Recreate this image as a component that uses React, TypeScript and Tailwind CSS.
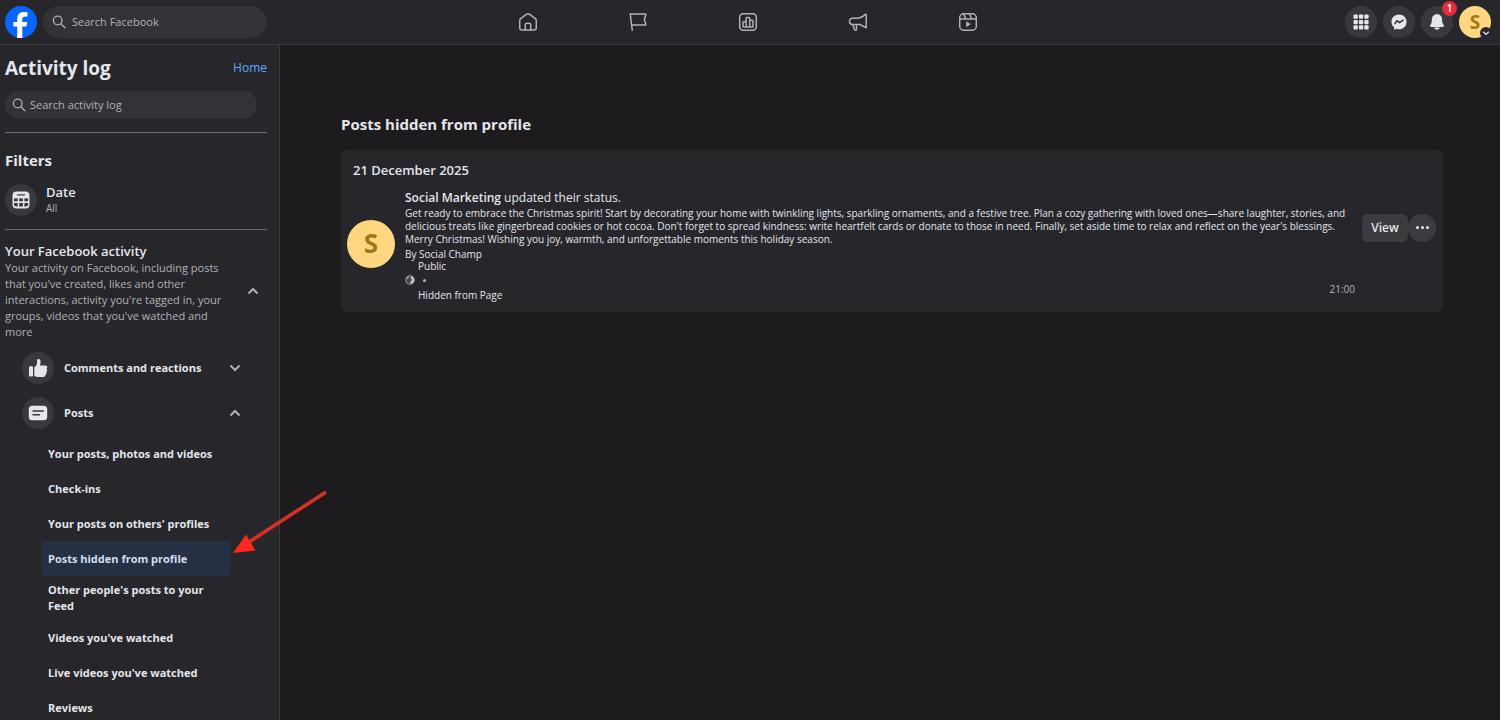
import type { ReactNode } from "react";

const activityLinks = [
  { label: "Your posts, photos and videos", href: "#posts" },
  { label: "Check-ins", href: "#check-ins" },
  { label: "Your posts on others' profiles", href: "#others" },
  { label: "Posts hidden from profile", href: "#hidden", active: true },
  { label: "Other people's posts to your Feed", href: "#feed" },
  { label: "Videos you've watched", href: "#videos" },
  { label: "Live videos you've watched", href: "#live" },
  { label: "Reviews", href: "#reviews" },
];

function FacebookLogo() {
  return (
    <svg viewBox="0 0 32 32" className="w-8 h-8">
      <circle cx="16" cy="16" r="16" fill="#0866ff" />
      <path
        d="M12.2 32V20.6H8.4V16h3.8v-2.6c0-5.2 2.4-7.3 7-7.3 1.400 0 2.500.1 3.300.3v4.200c-.5-.1-1.200-.1-2-.1-2.400 0-3.200.9-3.200 3.200V16h5l-.9 4.600h-4.100V32z"
        fill="#fff"
      />
    </svg>
  );
}

function SearchIcon() {
  return (
    <svg viewBox="0 0 14 14" className="w-[14px] h-[14px] shrink-0" fill="none" stroke="#b0b1b5" strokeWidth="1.3" strokeLinecap="round">
      <circle cx="5.700" cy="5.500" r="4.300" />
      <path d="M8.900 8.700l4 4" />
    </svg>
  );
}

function Chevron({ up = false }: { up?: boolean }) {
  return (
    <svg viewBox="0 0 12 12" className="w-3 h-3 shrink-0" fill="none" stroke="#b0b1b5" strokeWidth="2">
      <path d={up ? "M1.500 8.500L6 4l4.500 4.500" : "M1.500 3.500L6 8l4.500-4.500"} />
    </svg>
  );
}

function NavIcon({ label, children }: { label: string; children: ReactNode }) {
  return (
    <a href="#nav" aria-label={label} className="flex w-[110px] h-11 items-center justify-center">
      <svg viewBox="0 0 20 20" className="w-5 h-5" fill="none" stroke="#b0b1b5" strokeWidth="1.500" strokeLinejoin="round" strokeLinecap="round">
        {children}
      </svg>
    </a>
  );
}

function Header() {
  return (
    <header className="flex h-[45px] shrink-0 items-center border-b border-[#3a3a3f] bg-[#27272b] pl-[5px] pr-[9px]">
      <div className="flex flex-1 items-center gap-[6px]">
        <a href="#home" aria-label="Facebook"><FacebookLogo /></a>
        <label className="flex h-8 w-[224px] items-center gap-[6px] rounded-full bg-[#333337] px-[9px]">
          <SearchIcon />
          <input aria-label="Search Facebook" placeholder="Search Facebook" className="w-full bg-transparent text-[11px] outline-none placeholder:text-[#b0b1b5]" />
        </label>
      </div>

      <nav className="flex">
        <NavIcon label="Home">
          <path d="M1.700 8.600c0-1 .4-1.700 1.200-2.300l5.500-4c1-.7 2.200-.7 3.200 0l5.500 4c.8.600 1.200 1.300 1.200 2.300v6.900c0 1.500-1 2.500-2.500 2.500H4.200c-1.500 0-2.500-1-2.500-2.500z" />
          <path d="M7.300 18v-5.500c0-.8.500-1.300 1.300-1.300h2.800c.8 0 1.300.5 1.300 1.300V18" />
        </NavIcon>
        <NavIcon label="Pages">
          <path d="M4.300 18.300L2.200 2h15.100c.5 0 .7.300.5.800l-1.500 4.600 1.500 4.800c.2.500 0 .8-.5.800H3.700" />
        </NavIcon>
        <NavIcon label="Insights">
          <rect x="1.700" y="1.800" width="16.600" height="16.400" rx="3.500" />
          <path d="M5 14.300V10.400c0-.5.200-.7.700-.7h2.400v5.300H5.700c-.5 0-.7-.2-.7-.7zM8.100 15V6.200c0-.5.300-.8.800-.8h2c.5 0 .8.300.8.800V15zM11.700 8.300h2.500c.5 0 .8.300.8.800v5.100c0 .5-.3.800-.8.800h-2.500z" />
        </NavIcon>
        <NavIcon label="Ads">
          <path d="M18.200 2.700v13.100L12 12.500H4.400C2.600 12.500 1.500 11.300 1.500 9.600v-.4c0-1.700 1.100-2.900 2.900-2.900H10c3.200-.3 5.500-2.100 7.300-3.900.4-.4.900-.2.900.3z" />
          <path d="M5 12.700l1.300 4.600c.2.600.5.900 1.100.9.700 0 1.100-.5 1.100-1.200v-4.300" />
        </NavIcon>
        <NavIcon label="Reels">
          <rect x="1.700" y="1.800" width="16.600" height="16.400" rx="4" />
          <path d="M1.700 6.900h16.600M5.800 2.100l1.900 4.800M11.600 1.900l1.900 4.900" />
          <path d="M8.500 10.200v4.200l3.600-2.100z" fill="#b0b1b5" strokeWidth=".8" />
        </NavIcon>
      </nav>

      <div className="flex flex-1 items-center justify-end gap-[6px]">
        <button aria-label="Menu" className="flex size-8 items-center justify-center rounded-full bg-[#39393d]">
          <svg viewBox="0 0 16 16" className="w-4 h-4" fill="#e4e6eb">
            {[0.5, 5.9, 11.3].map((y) =>
              [0.5, 5.9, 11.3].map((x) => <rect key={`${x}-${y}`} x={x} y={y} width="4.300" height="4.300" rx="1" />)
            )}
          </svg>
        </button>
        <button aria-label="Messenger" className="flex size-8 items-center justify-center rounded-full bg-[#39393d]">
          <svg viewBox="0 0 16 16" className="w-4 h-4">
            <path d="M8 .5C3.700.5.500 3.600.5 7.700c0 2.200.9 4.100 2.400 5.400.2.200.2.400.2.600v1.200c0 .5.400.7.800.6l1.500-.6c.2-.1.300-.1.500 0 .7.200 1.400.3 2.100.3 4.300 0 7.500-3.100 7.500-7.300S12.300.5 8 .5z" fill="#e4e6eb" />
            <path d="M3.900 9.600l2.100-2.900 2.500 2 3.600-2.500" fill="none" stroke="#333337" strokeWidth="1.500" strokeLinejoin="round" strokeLinecap="round" />
          </svg>
        </button>
        <button aria-label="Notifications" className="relative flex size-8 items-center justify-center rounded-full bg-[#39393d]">
          <svg viewBox="0 0 16 16" className="w-4 h-4" fill="#e4e6eb">
            <path d="M8 .3c-2.900 0-5 2.100-5.100 4.900L2.700 8c0 .4-.2.800-.4 1.200L1.300 10.900c-.7 1.200-.1 2 1 2h11.400c1.100 0 1.700-.8 1-2l-1-1.700c-.2-.4-.4-.8-.4-1.200l-.2-2.800C13 2.400 10.900.3 8 .3z" />
            <path d="M5.300 13.400c.2 1.300 1.300 2.300 2.700 2.300s2.500-1 2.700-2.300z" />
          </svg>
          <span className="absolute -right-1 -top-[5px] flex size-[15px] items-center justify-center rounded-full bg-[#e02d3c] text-[10px] font-semibold text-white">1</span>
        </button>
        <button aria-label="Account" className="relative flex size-8 items-center justify-center rounded-full bg-[#ffd780] text-[19px] font-bold text-[#a07818]">
          S
          <span className="absolute -bottom-px -right-px flex size-3 items-center justify-center rounded-full bg-[#252533]">
            <svg viewBox="0 0 8 8" className="w-2 h-2" fill="none" stroke="#e4e6eb" strokeWidth="1.300">
              <path d="M1.200 2.700L4 5.400l2.800-2.700" />
            </svg>
          </span>
        </button>
      </div>
    </header>
  );
}

function Sidebar() {
  return (
    <aside className="w-[280px] shrink-0 overflow-y-auto border-r border-[#39393e] bg-[#27272b] pl-[5px] pr-3 [scrollbar-width:none]">
      <div className="flex h-[46px] items-center justify-between">
        <h1 className="text-[19px] font-bold text-[#e4e6eb]">Activity log</h1>
        <a href="#home" className="text-[12px] text-[#5aa7ff]">Home</a>
      </div>
      <label className="flex h-7 w-[252px] items-center gap-1 rounded-full bg-[#333337] px-[7px]">
        <SearchIcon />
        <input aria-label="Search activity log" placeholder="Search activity log" className="w-full bg-transparent text-[11px] outline-none placeholder:text-[#b0b1b5]" />
      </label>

      <section className="mt-[13px] border-y border-[#6b6c70] pt-[17px] pb-[13px]">
        <h2 className="text-[15px] leading-5 font-bold">Filters</h2>
        <button className="mt-[14px] flex w-full items-center gap-[9px] text-left">
          <span className="flex size-8 items-center justify-center rounded-full bg-[#39393d]">
            <svg viewBox="0 0 18 18" className="w-[18px] h-[18px]">
              <rect x=".5" y=".5" width="17" height="17" rx="4" fill="#e4e6eb" />
              <path d="M5.500 3.800h7" stroke="#39393d" strokeWidth="1.200" strokeLinecap="round" />
              <g fill="#39393d">
                <rect x="2" y="7.400" width="3.700" height="2.900" />
                <rect x="7.200" y="7.400" width="3.700" height="2.900" />
                <rect x="12.400" y="7.400" width="3.700" height="2.900" />
                <path d="M2 12h3.700v3.500H4.300C3 15.500 2 14.900 2 13.600z" />
                <rect x="7.200" y="12" width="3.700" height="3.500" />
                <path d="M12.400 12h3.700v1.600c0 1.300-1 1.900-2.300 1.900h-1.400z" />
              </g>
            </svg>
          </span>
          <span>
            <span className="block text-[13px] leading-4 font-semibold">Date</span>
            <span className="block text-[10px] leading-4 text-[#b0b1b5]">All</span>
          </span>
        </button>
      </section>

      <button className="mt-3 flex w-full items-center justify-between pr-2 text-left">
        <span className="w-[228px]">
          <span className="block text-[13px] leading-[18px] font-semibold">Your Facebook activity</span>
          <span className="block text-[11px] leading-4 text-[#b0b1b5]">
            Your activity on Facebook, including posts that you've created, likes and other interactions, activity you're tagged in, your groups, videos that you've watched and more
          </span>
        </span>
        <Chevron up />
      </button>

      <div className="mt-3 flex flex-col gap-[13px] pl-[17px] pr-[26px]">
        <button className="flex h-8 items-center gap-[10px] text-[11px] font-bold">
          <span className="flex size-8 items-center justify-center rounded-full bg-[#39393d]">
            <svg viewBox="0 0 20 20" className="w-5 h-5" fill="#e4e6eb">
              <rect x="1" y="8.200" width="4" height="10.300" rx="1" />
              <path d="M6.300 9.200c1.700-1.100 2.800-2.700 2.800-4.800V2.300c0-.9.500-1.400 1.300-1.400 1.500 0 2.200 1.300 2.200 2.900 0 1.500-.3 2.700-.7 3.700h5.300c1.300 0 2.100.8 2.100 1.800 0 .8-.4 1.300-.9 1.600.5.300.8.900.8 1.500 0 .8-.5 1.400-1.100 1.700.3.300.5.700.5 1.200 0 .9-.6 1.500-1.300 1.700.1 1.200-.8 1.900-2 1.900h-4.800c-1.600 0-3-.3-4.200-.9z" />
            </svg>
          </span>
          <span className="flex-1 text-left">Comments and reactions</span>
          <Chevron />
        </button>
        <button className="flex h-8 items-center gap-[10px] text-[11px] font-bold">
          <span className="flex size-8 items-center justify-center rounded-full bg-[#39393d]">
            <svg viewBox="0 0 20 16" className="w-5 h-4">
              <rect x=".8" y=".8" width="18.400" height="14.400" rx="3.500" fill="#e4e6eb" />
              <path d="M5 6h10.300M5 9.800h6.500" stroke="#39393d" strokeWidth="1.400" strokeLinecap="round" />
            </svg>
          </span>
          <span className="flex-1 text-left">Posts</span>
          <Chevron up />
        </button>
      </div>

      <ul className="mt-[7px] pl-[37px]">
        {activityLinks.map((link) => (
          <li key={link.label}>
            <a
              href={link.href}
              className={`flex min-h-[35px] w-[188px] items-center rounded-[3px] pl-[6px] pr-4 py-[6px] text-[11px] leading-4 font-bold ${link.active ? "bg-[#263045] text-[#d5def0]" : ""}`}
            >
              {link.label}
            </a>
          </li>
        ))}
      </ul>
    </aside>
  );
}

function HiddenPost() {
  return (
    <article className="flex items-center">
      <div className="mb-1 flex size-12 shrink-0 items-center justify-center rounded-full bg-[#ffd780] text-[26px] font-bold text-[#a07818]">S</div>
      <div className="ml-[10px] w-[950px] min-w-0">
        <p className="text-[12px] leading-[18px]"><b className="font-semibold">Social Marketing</b> updated their status.</p>
        <p className="max-w-[944px] text-[10px] leading-[13px]">
          Get ready to embrace the Christmas spirit! Start by decorating your home with twinkling lights, sparkling ornaments, and a festive tree. Plan a cozy gathering with loved ones—share laughter, stories, and delicious treats like gingerbread cookies or hot cocoa. Don't forget to spread kindness: write heartfelt cards or donate to those in need. Finally, set aside time to relax and reflect on the year's blessings. Merry Christmas! Wishing you joy, warmth, and unforgettable moments this holiday season.
        </p>
        <div className="flex items-end justify-between">
          <div className="pt-[2px] text-[10px] leading-3">
            <p>By Social Champ</p>
            <p className="pl-[13px]">Public</p>
            <p className="flex h-4 items-center gap-2">
              <svg viewBox="0 0 10 10" className="w-[10px] h-[10px]">
                <circle cx="5" cy="5" r="4.300" fill="#46464a" stroke="#b0b1b5" strokeWidth=".8" />
                <path d="M6.200 1.200c1.700.4 2.900 1.900 3 3.700 0 1.700-1 3.200-2.600 3.900L5.200 8.300l.3-1.700 1.400-1.300-.2-1.300-1.200-.6zM1.600 3l1.800-1.500.6.700-1.200 1.300-1 .6z" fill="#c4c5c9" />
              </svg>
              <span className="size-[3px] rounded-full bg-[#b0b1b5]" />
            </p>
            <p className="pl-[13px] leading-[14px]">Hidden from Page</p>
          </div>
          <time className="pb-[7px] text-[10px] leading-3 text-[#b0b1b5]">21:00</time>
        </div>
      </div>
      <div className="mb-9 ml-auto flex shrink-0 items-center">
        <button className="h-7 w-[46px] rounded-md bg-[#3b3b40] text-[12px] font-semibold">View</button>
        <button aria-label="More options" className="flex size-7 items-center justify-center gap-[2px] rounded-full bg-[#3b3b40]">
          <span className="size-[3px] rounded-full bg-[#e4e6eb]" />
          <span className="size-[3px] rounded-full bg-[#e4e6eb]" />
          <span className="size-[3px] rounded-full bg-[#e4e6eb]" />
        </button>
      </div>
    </article>
  );
}

export default function App() {
  return (
    <div className="relative flex h-screen flex-col overflow-hidden bg-[#1d1b1e] font-['Open_Sans','Noto_Sans',sans-serif] text-[#e4e6eb]">
      <Header />
      <div className="flex min-h-0 flex-1">
        <Sidebar />
        <main className="min-w-0 flex-1 pl-[61px] pr-[57px] pt-[69px]">
          <h2 className="text-[15px] leading-5 font-bold">Posts hidden from profile</h2>
          <section className="mt-4 rounded-md bg-[#27272b] pl-[6px] pr-[7px] pt-[10px] pb-[10px]">
            <h3 className="mb-[9px] pl-[6px] text-[13px] leading-5 font-semibold">21 December 2025</h3>
            <HiddenPost />
          </section>
        </main>
      </div>

      {/* pointer to the selected sidebar entry */}
      <svg viewBox="0 0 96 66" className="pointer-events-none absolute left-[233px] top-[489px] h-[66px] w-[96px]">
        <path d="M16 53L93 3" stroke="#d93025" strokeWidth="3.600" />
        <path d="M0 64L13 45.500l9.500 16z" fill="#fb2a1c" />
      </svg>
    </div>
  );
}
